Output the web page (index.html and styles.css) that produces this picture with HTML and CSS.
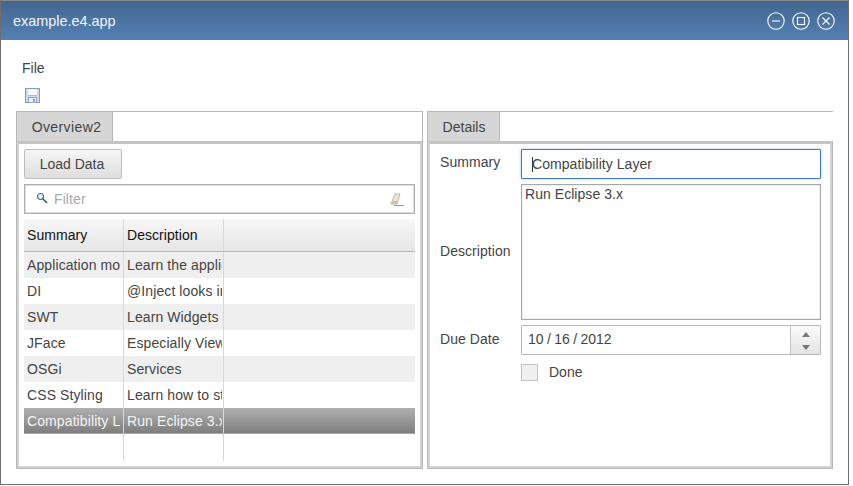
FILE: index.html
```html
<!DOCTYPE html>
<html lang="en">
<head>
<meta charset="utf-8">
<title>example.e4.app</title>
<link rel="stylesheet" href="styles.css">
</head>
<body>
<div class="window">
  <header class="titlebar">
    <span class="title">example.e4.app</span>
    <div class="controls">
      <svg class="ctl" viewBox="0 0 18 18"><circle cx="9" cy="9" r="8.200" /><path d="M5 9h8"/></svg>
      <svg class="ctl" viewBox="0 0 18 18"><circle cx="9" cy="9" r="8.200" /><rect x="5.500" y="5.500" width="7" height="7"/></svg>
      <svg class="ctl" viewBox="0 0 18 18"><circle cx="9" cy="9" r="8.200" /><path d="M5.500 5.500l7 7M12.500 5.500l-7 7"/></svg>
    </div>
  </header>
  <nav class="menubar"><span>File</span></nav>
  <div class="toolbar">
    <svg class="save" viewBox="0 0 15 15" width="15" height="15">
      <rect x="0.500" y="0.500" width="14" height="14" fill="#cfdcee" stroke="#7f9cc4"/>
      <rect x="3" y="1" width="9" height="6.500" fill="#f6f8fb"/>
      <path d="M3 7.500h9" stroke="#e3b667" stroke-width="1"/>
      <rect x="3.500" y="9.500" width="8" height="5" fill="#eef1f6" stroke="#8da5c6"/>
      <rect x="8" y="11" width="2" height="2.500" fill="#8095b5"/>
    </svg>
  </div>
  <main class="panes">
    <section class="pane pane-left">
      <div class="tabs"><div class="tab tab-overview">Overview2</div></div>
      <div class="content content-left">
        <button class="btn" type="button">Load Data</button>
        <div class="filter">
          <svg class="lens" viewBox="0 0 12 12" width="12" height="12"><circle cx="4.500" cy="4.500" r="3" fill="#eef3fa" stroke="#44689c" stroke-width="1.200"/><path d="M7 7l4 4" stroke="#2f4f80" stroke-width="1.500"/></svg>
          <span class="placeholder">Filter</span>
          <svg class="eraser" viewBox="0 0 14 14" width="14" height="14"><path d="M5 1h5L7 11H1z" fill="#ebe3d6" stroke="#c4b6a2"/><path d="M1 11l2-3h4L6 11z" fill="#cdbba3"/><path d="M4 12.500h10" stroke="#a89878"/></svg>
        </div>
        <div class="table">
          <div class="thead">
            <div class="th th-a">Summary</div>
            <div class="th th-b">Description</div>
            <div class="th th-c"></div>
          </div>
          <div class="row odd"><div class="cell c-a"><span class="txt">Application model</span></div><div class="cell c-b"><span class="txt">Learn the application model</span></div></div>
          <div class="row"><div class="cell c-a"><span class="txt">DI</span></div><div class="cell c-b"><span class="txt">@Inject looks interesting</span></div></div>
          <div class="row odd"><div class="cell c-a"><span class="txt">SWT</span></div><div class="cell c-b"><span class="txt">Learn Widgets</span></div></div>
          <div class="row"><div class="cell c-a"><span class="txt">JFace</span></div><div class="cell c-b"><span class="txt">Especially Viewers!</span></div></div>
          <div class="row odd"><div class="cell c-a"><span class="txt">OSGi</span></div><div class="cell c-b"><span class="txt">Services</span></div></div>
          <div class="row"><div class="cell c-a"><span class="txt">CSS Styling</span></div><div class="cell c-b"><span class="txt">Learn how to style</span></div></div>
          <div class="row selected"><div class="cell c-a"><span class="txt">Compatibility Layer</span></div><div class="cell c-b"><span class="txt">Run Eclipse 3.x</span></div></div>
          <div class="row filler"><div class="cell c-a"></div><div class="cell c-b"></div></div>
        </div>
      </div>
    </section>
    <section class="pane pane-right">
      <div class="tabs"><div class="tab tab-details">Details</div></div>
      <div class="content content-right">
        <div class="form-row row-summary">
          <label class="lbl">Summary</label>
          <div class="input focused"><span class="caret"></span>Compatibility Layer</div>
        </div>
        <div class="form-row row-desc">
          <label class="lbl">Description</label>
          <div class="textarea">Run Eclipse 3.x</div>
        </div>
        <div class="form-row row-date">
          <label class="lbl">Due Date</label>
          <div class="date">
            <span class="date-text">10 / 16 / 2012</span>
            <div class="spinner">
              <svg viewBox="0 0 8 5" width="8" height="5"><path d="M4 0l4 5H0z"/></svg>
              <svg viewBox="0 0 8 5" width="8" height="5"><path d="M0 0h8L4 5z"/></svg>
            </div>
          </div>
        </div>
        <div class="form-row row-done">
          <span class="lbl"></span>
          <span class="check"></span>
          <span class="done-label">Done</span>
        </div>
      </div>
    </section>
  </main>
</div>
</body>
</html>
```
FILE: styles.css
```css
html, body { margin: 0; padding: 0; background: #fff; }
body { font-family: "Liberation Sans", Arial, sans-serif; font-size: 14px; color: #444; width: 853px; height: 486px; overflow: hidden; }
.window { box-sizing: border-box; width: 849px; height: 485px; border: 1px solid #6e6e6e; border-top-color: #8a8a8a; display: flex; flex-direction: column; background: #fff; }
.titlebar { height: 39px; flex: none; display: flex; align-items: center; justify-content: space-between; padding: 0 13px 0 12px; background: linear-gradient(#426690, #5480b4); color: #fff; }
.title { font-size: 14.400px; color: #f4f6f8; }
.controls { display: flex; gap: 7px; margin-top: 1px; }
.ctl { width: 18px; height: 18px; fill: none; stroke: #fff; stroke-width: 1.100; overflow: visible; }
.menubar { height: 41px; flex: none; padding: 15px 21px 0; display: flex; align-items: center; box-sizing: border-box; }
.toolbar { height: 30px; flex: none; padding: 7px 0 0 24px; box-sizing: border-box; }
.save { display: block; }
.panes { display: flex; gap: 4px; padding-left: 15px; }
.pane { box-sizing: border-box; height: 358px; display: flex; flex-direction: column; }
.pane-left { width: 407px; border: 1px solid #b8b8b8; }
.pane-right { width: 406px; border-top: 1px solid #b8b8b8; border-left: 1px solid #b8b8b8; border-bottom: 1px solid #b8b8b8; }
.tabs { height: 29px; flex: none; display: flex; }
.tab { background: #d6d6d6; border-right: 1px solid #b8b8b8; display: flex; align-items: center; justify-content: center; box-sizing: border-box; }
.tab-overview { width: 96px; letter-spacing: 0.400px; padding-left: 4px; }
.tab-details { width: 72px; padding-left: 1px; }
.content { flex: 1; box-sizing: border-box; border: 2px solid #d2d2d2; border-top: 3px solid #c4c4c4; min-height: 0; }
.content-left { padding: 5px 5px 0; display: flex; flex-direction: column; }
.content-right { padding: 5px 9px 0 10px; margin-right: 1px; box-shadow: 1px 0 0 #b8b8b8; }
.btn { width: 98px; height: 30px; flex: none; font: inherit; color: #444; border: 1px solid #bdbdbd; border-radius: 2px; background: linear-gradient(#f6f6f6, #dedede); padding: 0 2px 0 0; }
.filter { flex: none; height: 30px; margin-top: 5px; box-sizing: border-box; border: 1px solid #aeaeae; box-shadow: inset 0 0 0 1px #dedede; display: flex; align-items: center; padding: 0 10px 0 11px; width: 391px; }
.lens { margin-right: 6px; margin-top: -3px; }
.placeholder { flex: 1; color: #a9a9a9; letter-spacing: 0.100px; }
.eraser { margin-top: 1px; }
.table { width: 391px; margin-top: 5px; flex: 1; display: flex; flex-direction: column; min-height: 0; }
.thead { height: 33px; flex: none; display: flex; box-sizing: border-box; background: linear-gradient(#f7f7f7, #e6e6e6); border-bottom: 1px solid #b8b8b8; color: #111; }
.th { box-sizing: border-box; padding: 7px 0 0 3px; line-height: 18px; letter-spacing: 0.050px; }
.th-a, .c-a, .th-b, .c-b { width: 100px; border-right: 1px solid #d8d8d8; flex: none; box-sizing: border-box; }
.row { display: flex; height: 26px; flex: none; }
.odd { background: #efefef; }
.cell { padding-left: 3px; line-height: 26px; }
.txt { display: block; white-space: nowrap; overflow: hidden; letter-spacing: 0.100px; }
.c-a .txt { width: 93px; }
.c-b .txt { width: 95px; }
.selected { background: linear-gradient(#b0b0b0, #7e7e7e); border-bottom: 1px solid #a8a8a8; box-sizing: border-box; color: #f4f4f4; }
.filler { height: 27px; }
.form-row { display: flex; }
.lbl { width: 81px; flex: none; letter-spacing: 0.050px; }
.row-summary { height: 35px; align-items: flex-start; }
.row-summary .lbl { line-height: 26px; }
.input { width: 300px; height: 30px; box-sizing: border-box; border: 1px solid #4577b3; border-radius: 1px; box-shadow: 0 0 3px rgba(90,140,200,0.500); padding: 0 10px; line-height: 28px; position: relative; letter-spacing: 0.050px; }
.caret { position: absolute; left: 10px; top: 7px; width: 1px; height: 15px; background: #333; }
.row-desc { height: 141px; align-items: flex-start; }
.row-desc .lbl { align-self: center; margin-top: -7px; }
.textarea { width: 300px; height: 136px; box-sizing: border-box; border: 1px solid #a8a8a8; box-shadow: inset 0 0 2px #ccc; padding: 0 3px; line-height: 18px; letter-spacing: 0.050px; }
.row-date { height: 38px; }
.row-date .lbl { line-height: 28px; }
.date { width: 300px; height: 30px; box-sizing: border-box; border: 1px solid #b8b8b8; border-radius: 1px; display: flex; }
.date-text { flex: 1; padding-left: 6px; line-height: 27px; word-spacing: -0.500px; }
.spinner { width: 30px; border-left: 1px solid #c4c4c4; background: linear-gradient(#fbfbfb, #e4e4e4); display: flex; flex-direction: column; align-items: center; gap: 8px; padding-top: 6px; box-sizing: border-box; }
.spinner svg { fill: #777; display: block; }
.row-done { align-items: center; height: 18px; }
.check { width: 17px; height: 17px; box-sizing: border-box; border: 1px solid #c4c4c4; background: #f0f0f0; }
.done-label { margin-left: 11px; }
```
